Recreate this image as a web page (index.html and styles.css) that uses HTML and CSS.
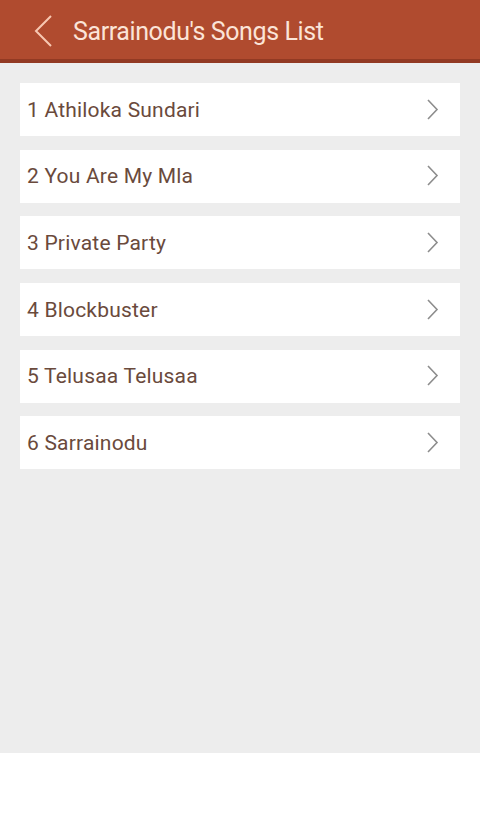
FILE: index.html
```html
<!DOCTYPE html>
<html lang="en">
<head>
  <meta charset="UTF-8" />
  <title>Sarrainodu's Songs List</title>
  <meta name="viewport" content="width=device-width, initial-scale=1" />
  <link rel="stylesheet" href="styles.css">
</head>
<body>

<header class="topbar">
  <svg class="back" width="20" height="34" viewBox="0 0 20 34">
    <polyline points="17,2 2,17 17,32" />
  </svg>
  <h1>Sarrainodu's Songs List</h1>
</header>

<main class="content">
  <ul class="songs">
    <li class="song"><span>1 Athiloka Sundari</span><svg class="chev" width="12" height="22" viewBox="0 0 12 22"><polyline points="1,1 10,10.5 1,20" /></svg></li>
    <li class="song"><span>2 You Are My Mla</span><svg class="chev" width="12" height="22" viewBox="0 0 12 22"><polyline points="1,1 10,10.5 1,20" /></svg></li>
    <li class="song"><span>3 Private Party</span><svg class="chev" width="12" height="22" viewBox="0 0 12 22"><polyline points="1,1 10,10.5 1,20" /></svg></li>
    <li class="song"><span>4 Blockbuster</span><svg class="chev" width="12" height="22" viewBox="0 0 12 22"><polyline points="1,1 10,10.5 1,20" /></svg></li>
    <li class="song"><span>5 Telusaa Telusaa</span><svg class="chev" width="12" height="22" viewBox="0 0 12 22"><polyline points="1,1 10,10.5 1,20" /></svg></li>
    <li class="song"><span>6 Sarrainodu</span><svg class="chev" width="12" height="22" viewBox="0 0 12 22"><polyline points="1,1 10,10.5 1,20" /></svg></li>
  </ul>
</main>

<footer class="bottom"></footer>

</body>
</html>
```

FILE: styles.css
```css
:root {
  --primary: #b04b2f;
  --primary-dark: #923a23;
  --bg: #ededed;
  --text: #6a4a3c;
  --chev: #8d8d8d;
}

* {
  box-sizing: border-box;
}

body {
  margin: 0;
  padding: 0;
  font-family: Roboto, "Liberation Sans", sans-serif;
  background: white;
}

.topbar {
  height: 63px;
  background: var(--primary);
  border-bottom: 4px solid var(--primary-dark);
  display: flex;
  align-items: center;
  padding: 3px 0 0 34px;
}

.back {
  fill: none;
  stroke: #f7c8b2;
  stroke-width: 2;
}

.topbar h1 {
  margin: 0 0 0 19px;
  font-size: 25px;
  letter-spacing: -0.4px;
  font-weight: 400;
  color: #fbe4d8;
}

.content {
  background: var(--bg);
  height: 690px;
  padding: 20px 20px 0;
}

.songs {
  list-style: none;
  margin: 0;
  padding: 0;
  display: flex;
  flex-direction: column;
  gap: 13.7px;
}

.song {
  height: 53px;
  background: white;
  display: flex;
  align-items: center;
  justify-content: space-between;
  padding: 0 21px 0 7px;
  font-size: 21px;
  letter-spacing: 0.2px;
  color: var(--text);
}

.chev {
  fill: none;
  stroke: var(--chev);
  stroke-width: 1.6;
}

.bottom {
  height: 67px;
  background: white;
}
```
